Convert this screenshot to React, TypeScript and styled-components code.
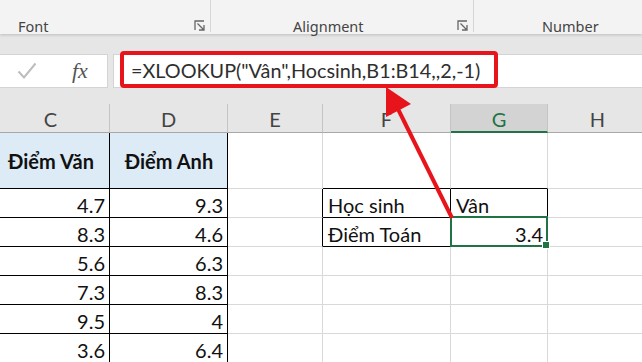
import React from 'react';
import styled, { createGlobalStyle } from 'styled-components';

const Global = createGlobalStyle`
  html, body { margin: 0; padding: 0; background: #fff; overflow: hidden; }
  body { width: 642px; height: 362px; font-family: Lato, "Noto Sans", sans-serif; }
  #root { width: 642px; height: 362px; }
`;

const Page = styled.div`
  position: relative;
  width: 642px;
  height: 362px;
  overflow: hidden;
  background: #fff;
`;

const Ribbon = styled.div`
  position: relative;
  z-index: 2;
  height: 34px;
  display: flex;
  background: #f3f3f3;
  box-shadow: 0 1px 3px rgba(0, 0, 0, 0.18);
`;

const Group = styled.div<{ $w?: number; $pad: number }>`
  ${(p) => (p.$w ? `width: ${p.$w}px; flex: none;` : 'flex: 1;')}
  box-sizing: border-box;
  height: 32px;
  display: flex;
  align-items: flex-end;
  padding-left: ${(p) => p.$pad}px;
  border-right: ${(p) => (p.$w ? '1px solid #d6d6d6' : 'none')};
`;

const GroupLabel = styled.span`
  font-family: "Noto Sans", sans-serif;
  font-size: 14.5px;
  line-height: 17px;
  color: #444;
  margin-bottom: -3px;
`;

const Launcher = styled.svg`
  margin-left: auto;
  margin-right: 4px;
  margin-bottom: 0;
  flex: none;
`;

const FormulaArea = styled.div`
  height: 70px;
  box-sizing: border-box;
  padding: 20px 0 16px;
  display: flex;
  gap: 5px;
  background: #e6e6e6;
`;

const ActionBox = styled.div`
  width: 108px;
  flex: none;
  box-sizing: border-box;
  height: 34px;
  background: #fff;
  border: 1px solid #d4d4d4;
  border-left: none;
  display: flex;
  align-items: center;
  padding-left: 17px;
  gap: 35px;
`;

const Fx = styled.span`
  font-family: "Liberation Serif", "DejaVu Serif", serif;
  font-style: italic;
  font-size: 22px;
  color: #555;
  line-height: 1;
  margin-top: -1px;
`;

const FormulaInput = styled.div`
  flex: 1;
  height: 34px;
  box-sizing: border-box;
  background: #fff;
  border: 1px solid #d4d4d4;
  border-right: none;
  display: flex;
  align-items: flex-start;
  padding-left: 6px;
`;

const Highlight = styled.div`
  position: relative;
  z-index: 3;
  width: 378px;
  height: 37px;
  margin-top: -4px;
  box-sizing: border-box;
  border: 4px solid #e8141c;
  border-radius: 4px;
  display: flex;
  align-items: center;
  padding: 1px 0 0 7px;
  font-family: Lato, sans-serif;
  font-size: 19.8px;
  color: #2e2e2e;
  white-space: nowrap;
`;

const Grid = styled.div`
  display: grid;
  grid-template-columns: 118px 118px 95px 128px 97px 100px;
  grid-template-rows: 29px 56px repeat(6, 29px);
  margin-left: -8px;
`;

const ColHead = styled.div<{ $sel?: boolean }>`
  box-sizing: border-box;
  display: flex;
  align-items: center;
  justify-content: center;
  background: ${(p) => (p.$sel ? '#d3d3d3' : '#e6e6e6')};
  border-right: 1px solid #c4c4c4;
  border-bottom: ${(p) => (p.$sel ? '2px solid #217346' : '1px solid #a8a8a8')};
  color: ${(p) => (p.$sel ? '#217346' : '#444')};
  font-size: 20px;
  padding-top: 2px;
`;

type CellProps = {
  $align?: 'left' | 'right' | 'center';
  $bold?: boolean;
  $fill?: string;
  $r?: boolean;
  $b?: boolean;
  $mid?: boolean;
};

const Cell = styled.div<CellProps>`
  position: relative;
  box-sizing: border-box;
  display: flex;
  align-items: ${(p) => (p.$mid ? 'center' : 'flex-end')};
  justify-content: ${(p) =>
    p.$align === 'right' ? 'flex-end' : p.$align === 'center' ? 'center' : 'flex-start'};
  padding: 0 4px 0 5px;
  background: ${(p) => p.$fill || '#fff'};
  border-right: 1px solid ${(p) => (p.$r ? '#000' : '#d9d9d9')};
  border-bottom: 1px solid ${(p) => (p.$b ? '#000' : '#d9d9d9')};
  font-size: 20px;
  line-height: 24px;
  font-weight: ${(p) => (p.$bold ? 700 : 400)};
  color: #111;
  white-space: nowrap;
`;

const Selection = styled.div`
  position: absolute;
  z-index: 2;
  top: -2px;
  left: -1px;
  right: -1px;
  bottom: -1px;
  border: 2px solid #217346;
  pointer-events: none;
`;

const FillHandle = styled.div`
  position: absolute;
  right: -4px;
  bottom: -4px;
  width: 6px;
  height: 6px;
  background: #217346;
  border: 1px solid #fff;
`;

const Overlay = styled.svg`
  position: absolute;
  left: 0;
  top: 0;
  z-index: 10;
  pointer-events: none;
`;

const LauncherIcon = () => (
  <Launcher width="12" height="12" viewBox="0 0 12 12">
    <path d="M1 10 V1 H10" fill="none" stroke="#666" strokeWidth="1.3" />
    <path d="M3.5 3.5 L10 10 M10 5 V10 H5" fill="none" stroke="#666" strokeWidth="1.3" />
  </Launcher>
);

type Row = { c: string; d: string };
const rows: Row[] = [
  { c: '4.7', d: '9.3' },
  { c: '8.3', d: '4.6' },
  { c: '5.6', d: '6.3' },
  { c: '7.3', d: '8.3' },
  { c: '9.5', d: '4' },
  { c: '3.6', d: '6.4' },
];

export default function App() {
  return (
    <Page>
      <Global />
      <Ribbon>
        <Group $w={211} $pad={18}>
          <GroupLabel>Font</GroupLabel>
          <LauncherIcon />
        </Group>
        <Group $w={263} $pad={82}>
          <GroupLabel>Alignment</GroupLabel>
          <LauncherIcon />
        </Group>
        <Group $pad={68}>
          <GroupLabel>Number</GroupLabel>
        </Group>
      </Ribbon>
      <FormulaArea>
        <ActionBox>
          <svg width="20" height="18" viewBox="0 0 20 18">
            <path d="M1.5 9.5 L7 15.5 L18.5 1.5" fill="none" stroke="#bdbdbd" strokeWidth="2" />
          </svg>
          <Fx>fx</Fx>
        </ActionBox>
        <FormulaInput>
          <Highlight>=XLOOKUP("Vân",Hocsinh,B1:B14,,2,-1)</Highlight>
        </FormulaInput>
      </FormulaArea>
      <Grid>
        <ColHead>C</ColHead>
        <ColHead>D</ColHead>
        <ColHead>E</ColHead>
        <ColHead>F</ColHead>
        <ColHead $sel>G</ColHead>
        <ColHead>H</ColHead>

        <Cell $fill="#ddebf7" $bold $align="center" $mid $r $b>Điểm Văn</Cell>
        <Cell $fill="#ddebf7" $bold $align="center" $mid $r $b>Điểm Anh</Cell>
        <Cell />
        <Cell $b />
        <Cell $b />
        <Cell />

        {rows.map((r, i) => (
          <React.Fragment key={i}>
            <Cell $align="right" $r $b>{r.c}</Cell>
            <Cell $align="right" $r $b>{r.d}</Cell>
            <Cell $r={i < 2} />
            {i === 0 && <Cell $r $b>Học sinh</Cell>}
            {i === 0 && <Cell $r $b>Vân</Cell>}
            {i === 1 && <Cell $r $b>Điểm Toán</Cell>}
            {i === 1 && (
              <Cell $align="right" $r $b>
                3.4
                <Selection>
                  <FillHandle />
                </Selection>
              </Cell>
            )}
            {i > 1 && <Cell />}
            {i > 1 && <Cell />}
            <Cell />
          </React.Fragment>
        ))}
      </Grid>
      <Overlay width="642" height="362" viewBox="0 0 642 362">
        <line x1="452" y1="218" x2="398" y2="109" stroke="#e8141c" strokeWidth="4" />
        <polygon points="386,87 411,104 386,117" fill="#e8141c" />
      </Overlay>
    </Page>
  );
}
